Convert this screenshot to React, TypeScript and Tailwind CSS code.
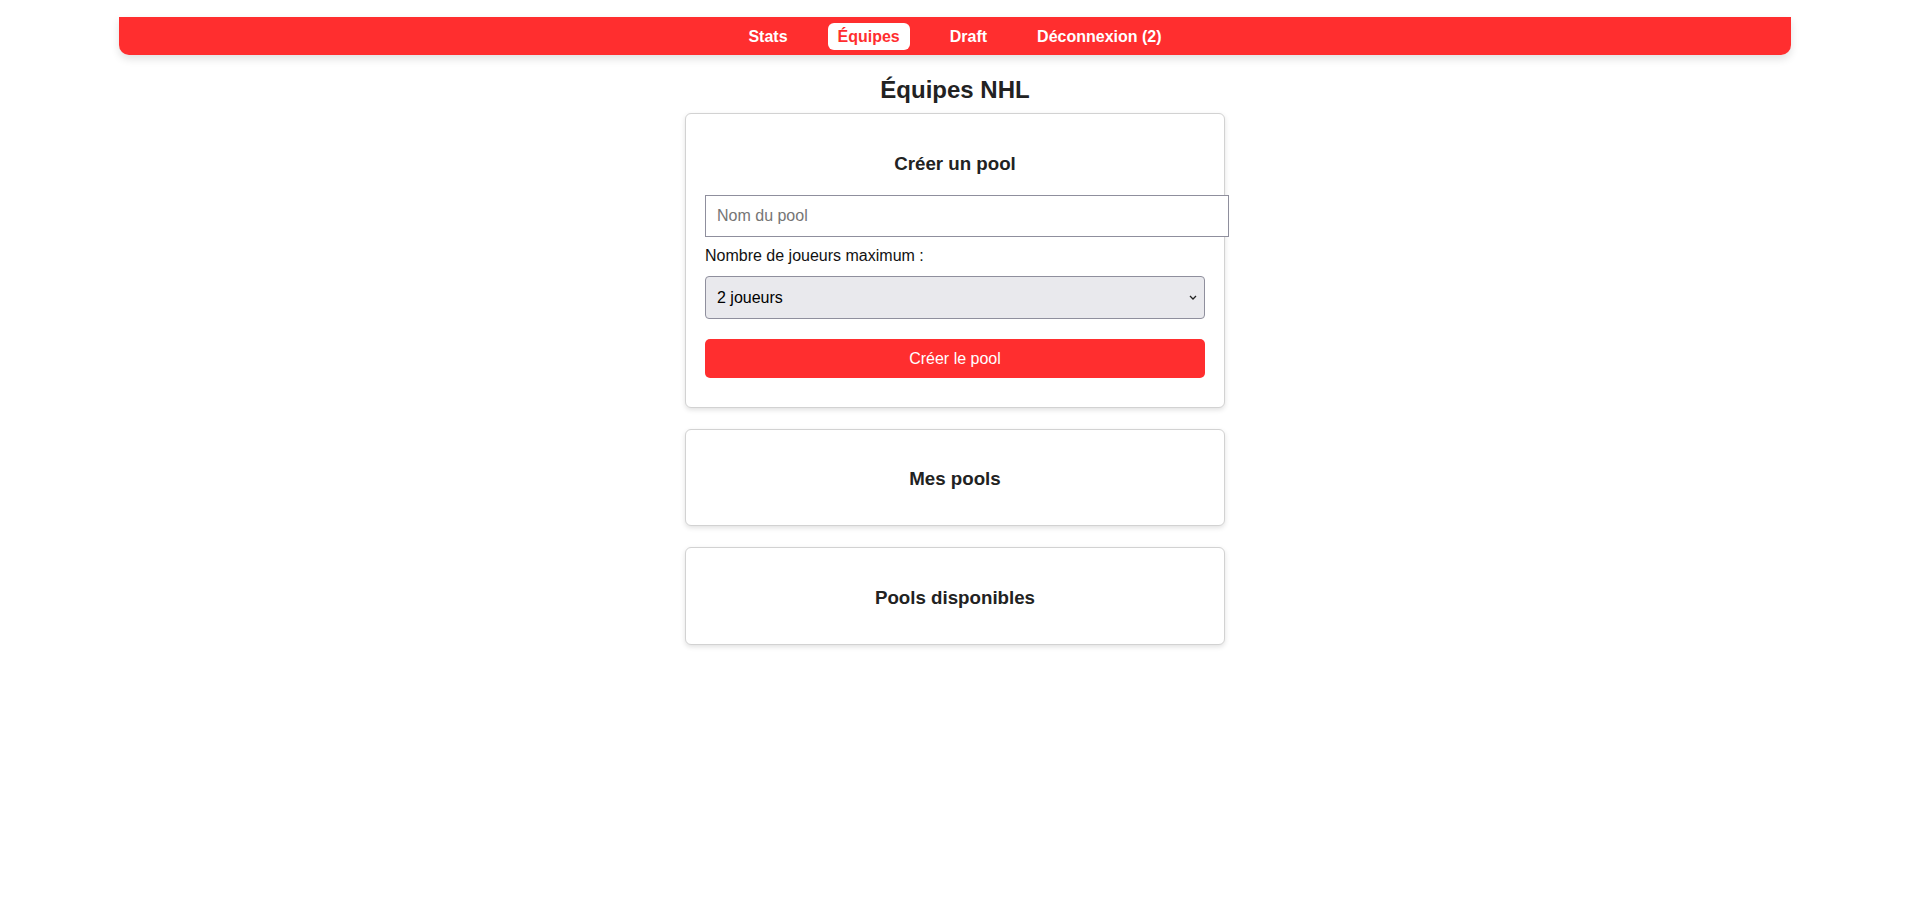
import { useState } from "react";

const links = ["Stats", "Équipes", "Draft", "Déconnexion (2)"];

function Card({ title, children, pt = "pt-[38px]", pb = "pb-[35px]" }: { title: string; children?: React.ReactNode; pt?: string; pb?: string }) {
  return (
    <section className={`mx-auto w-[540px] rounded-[6px] border border-[#d2d2d2] bg-white px-[19px] shadow-[0_2px_5px_rgba(0,0,0,0.12)] ${pt} ${pb}`}>
      <h3 className="text-center text-[18.72px] font-bold leading-[22px] text-[#222]">{title}</h3>
      {children}
    </section>
  );
}

export default function App() {
  const [name, setName] = useState("");
  const [max, setMax] = useState("2");

  return (
    <div className="min-h-screen bg-white pr-[2px] font-['Liberation_Sans',Arial,sans-serif] text-[#111]">
      <nav className="ml-[119px] mr-[119px] mt-[17px] flex h-[38px] items-center justify-center gap-[30px] rounded-b-[10px] bg-[#ff2e2f] shadow-[0_4px_8px_rgba(0,0,0,0.12)]">
        {links.map((l) => (
          <a
            key={l}
            className={
              l === "Équipes"
                ? "rounded-[6px] bg-white px-[10px] py-[4px] text-[16px] font-bold leading-[19px] text-[#ff2e2f]"
                : "px-[10px] py-[4px] text-[16px] font-bold leading-[19px] text-white"
            }
          >
            {l}
          </a>
        ))}
      </nav>

      <h1 className="mt-[21px] text-center text-[24px] font-bold leading-[28px] text-[#222]">Équipes NHL</h1>

      <div className="mt-[9px] flex flex-col gap-[21px]">
        <Card title="Créer un pool" pt="pt-[39px]" pb="pb-[29px]">
          <input
            className="mt-[20px] box-content block h-[20px] w-[500px] border border-[#8f8f9d] bg-white px-[11px] py-[10px] text-[16px] text-black outline-none placeholder:text-[#757575]"
            placeholder="Nom du pool"
            value={name}
            onChange={(e) => setName(e.target.value)}
          />
          <label className="mt-[10px] block text-[16px] leading-[18px] text-[#111]">Nombre de joueurs maximum :</label>
          <div className="relative mt-[11px]">
            <select
              className="block h-[43px] w-[500px] appearance-none rounded-[4px] border border-[#8f8f9d] bg-[#e9e9ed] px-[11px] text-[16px] text-black outline-none"
              value={max}
              onChange={(e) => setMax(e.target.value)}
            >
              {[2, 3, 4, 5, 6, 8, 10].map((n) => (
                <option key={n} value={String(n)}>
                  {n} joueurs
                </option>
              ))}
            </select>
            <svg className="pointer-events-none absolute right-[8px] top-[19px]" width="8" height="5" viewBox="0 0 8 5">
              <path d="M1 1 L4 4 L7 1" fill="none" stroke="#222" strokeWidth="1.3" />
            </svg>
          </div>
          <button className="mt-[20px] block h-[39px] w-[500px] rounded-[5px] bg-[#ff2e2f] text-[16px] text-white">
            Créer le pool
          </button>
        </Card>

        <Card title="Mes pools" />
        <Card title="Pools disponibles" pt="pt-[39px]" pb="pb-[35px]" />
      </div>
    </div>
  );
}
